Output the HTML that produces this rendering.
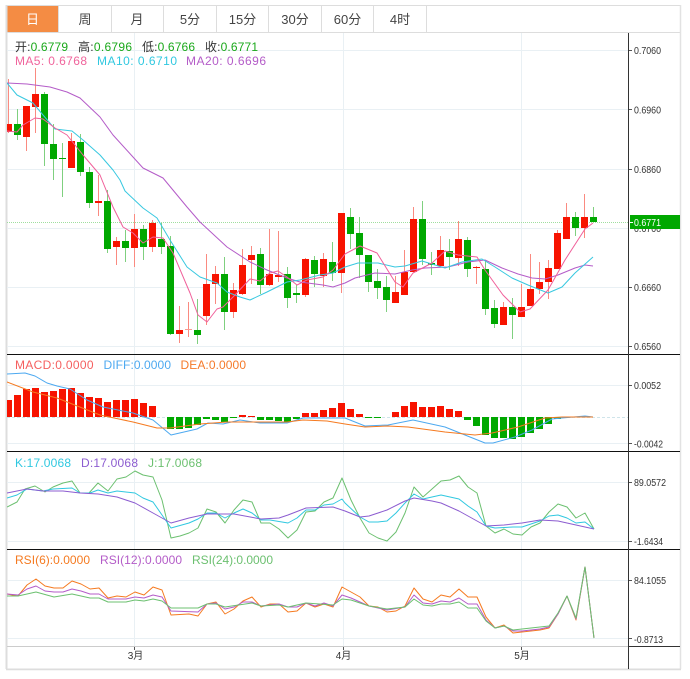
<!DOCTYPE html>
<html><head><meta charset="utf-8"><title>K</title>
<style>
html,body{margin:0;padding:0;background:#fff;width:690px;height:679px;overflow:hidden}
svg{display:block}
text{font-family:"Liberation Sans","Noto Sans CJK SC",sans-serif;font-size:12px}
.t{font-size:13px;fill:#444;text-anchor:middle}
.a{font-size:10px;fill:#333}
.m{font-size:10px;fill:#333;text-anchor:middle}
.l{fill:none;stroke-width:1;stroke-linejoin:round}
</style></head><body>
<svg width="690" height="679" viewBox="0 0 690 679" xmlns="http://www.w3.org/2000/svg">
<defs><clipPath id="c"><rect x="7" y="33" width="621" height="613"/></clipPath></defs>
<rect width="690" height="679" fill="#fff"/>
<!-- tabs -->
<rect x="7" y="6" width="51" height="26" fill="#f48c44"/>
<path d="M6 5.5H680.5V669H6.5V5.5M7 32.5H680M58.5 6V32M111.5 6V32M163.5 6V32M216.5 6V32M268.5 6V32M321.5 6V32M373.5 6V32M426.5 6V32" fill="none" stroke="#dddddd" stroke-width="1"/>
<path d="M6.5 5V669" stroke="#dddddd" stroke-width="2" fill="none"/>
<path d="M680.5 5V669" stroke="#e2e2e2" stroke-width="1.5" fill="none"/>
<path d="M6 669.5H681" stroke="#dddddd" stroke-width="1.5" fill="none"/>
<text class="t" x="32.5" y="24" style="fill:#fff">日</text>
<text class="t" x="85" y="24">周</text>
<text class="t" x="137" y="24">月</text>
<text class="t" x="190" y="24">5分</text>
<text class="t" x="242.5" y="24">15分</text>
<text class="t" x="295" y="24">30分</text>
<text class="t" x="347.5" y="24">60分</text>
<text class="t" x="400" y="24">4时</text>
<!-- grid -->
<path d="M7 50.5H628M7 109.5H628M7 169.5H628M7 228.5H628M7 287.5H628M7 346.5H628M7 385.5H628M7 443.5H628M7 482.5H628M7 541.5H628M7 580.5H628M7 638.5H628M134.5 33V646M343.5 33V646M521.5 33V646" stroke="#e9f0f4" stroke-width="1" fill="none"/>
<path d="M7 222.5H628" stroke="#9fdf9f" stroke-width="1" stroke-dasharray="1 1" fill="none"/>
<g clip-path="url(#c)">
<!-- wicks -->
<path fill="none" stroke="#fa8a80" stroke-width="1" d="M8.5 79V133M26.5 106V151M35.5 68V133M71.5 133V168M98.5 175V216M116.5 237V265M134.5 214V267M152.5 220V252M179.5 306V343M188.5 302V337M206.5 254V325M215.5 266V304M233.5 283V318M242.5 249V295M251.5 246V284M269.5 229V286M278.5 231V282M305.5 258V297M323.5 253V287M341.5 213V293M395.5 276V303M404.5 250V295M413.5 207V272M440.5 236V266M458.5 221V266M476.5 266V284M503.5 302V325M521.5 284V317M530.5 254V306M539.5 262V294M548.5 260V299M557.5 230V269M566.5 203V239M584.5 194V238"/>
<path fill="none" stroke="#7fd07f" stroke-width="1" d="M17.5 109V140M44.5 92V166M53.5 124V180M62.5 143V197M80.5 134V176M89.5 167V208M107.5 190V253M125.5 230V262M143.5 225V260M161.5 223V254M170.5 236V335M197.5 299V344M224.5 257V330M260.5 248V294M287.5 267V308M296.5 285V303M314.5 256V287M332.5 242V281M350.5 208V249M359.5 217V278M368.5 255V292M377.5 269V299M386.5 276V312M422.5 201V265M431.5 252V275M449.5 239V270M467.5 237V277M485.5 260V315M494.5 300V328M512.5 298V339M575.5 212V236M593.5 207V222"/>
<!-- bodies -->
<path fill="#f71300" d="M5 124h7v8h-7zM23 106h7v31h-7zM32 94h7v13h-7zM68 141h7v27h-7zM95 201h7v2h-7zM113 241h7v6h-7zM131 229h7v19h-7zM149 223h7v24h-7zM176 330h7v4h-7zM203 284h7v32h-7zM212 274h7v10h-7zM230 290h7v22h-7zM239 265h7v29h-7zM248 255h7v5h-7zM266 274h7v11h-7zM275 275h7v2h-7zM302 259h7v36h-7zM320 259h7v17h-7zM338 213h7v60h-7zM392 292h7v11h-7zM401 272h7v23h-7zM410 219h7v53h-7zM437 250h7v16h-7zM455 239h7v19h-7zM473 267h7v1h-7zM500 307h7v18h-7zM518 307h7v10h-7zM527 289h7v17h-7zM536 282h7v7h-7zM545 268h7v14h-7zM554 233h7v36h-7zM563 217h7v22h-7zM581 217h7v11h-7z"/>
<path fill="#fa9a90" d="M185 329h7v1h-7z"/>
<path fill="#00a800" d="M14 124h7v11h-7zM41 94h7v50h-7zM50 144h7v15h-7zM59 158h7v1h-7zM77 142h7v30h-7zM86 172h7v31h-7zM104 201h7v48h-7zM122 241h7v7h-7zM140 229h7v18h-7zM158 239h7v8h-7zM167 246h7v88h-7zM194 330h7v5h-7zM221 274h7v38h-7zM257 254h7v31h-7zM284 274h7v24h-7zM293 293h7v2h-7zM311 260h7v14h-7zM329 262h7v11h-7zM347 217h7v17h-7zM356 233h7v22h-7zM365 255h7v27h-7zM374 281h7v7h-7zM383 287h7v13h-7zM419 219h7v40h-7zM428 263h7v2h-7zM446 251h7v6h-7zM464 240h7v29h-7zM482 269h7v40h-7zM491 308h7v16h-7zM509 307h7v8h-7zM572 217h7v11h-7zM590 217h7v5h-7z"/>
<!-- MA -->
<polyline class="l" stroke="#b45cc8" points="7,83 27,84 50,87 67,92 80,98 100,117 113,135 133,157 143,168 163,178 187,207 200,222 227,247 250,262 267,270 287,278 300,282 323,285 333,287 345,283 355,278 375,273 395,274 412,270 425,268 448,267 468,262 485,260 502,268 518,274 532,278 545,279 558,275 575,268 585,265 593,266"/>
<polyline class="l" stroke="#38c8e0" points="7,83 17,95 33,103 43,115 55,129 72,131 83,140 100,155 113,170 120,180 125,191 143,208 157,218 170,240 187,267 200,277 217,283 227,292 240,297 250,300 267,292 287,282 300,280 320,275 333,273 345,267 358,263 378,263 395,267 405,266 422,261 445,268 462,262 482,259 495,267 512,278 528,285 548,293 562,287 575,273 593,257"/>
<polyline class="l" stroke="#f0609a" points="7,131 17,132 23,125 35,118 43,119 55,128 67,135 83,155 100,175 102,180 113,207 123,227 133,233 143,243 153,237 163,238 173,253 190,293 198,315 207,322 217,309 223,307 233,297 250,279 260,281 270,273 278,271 287,277 297,285 307,280 323,277 333,270 345,254 360,246 377,253 395,282 403,287 413,273 432,263 445,251 458,255 477,257 485,270 503,295 520,312 530,309 548,290 565,260 585,229 593,223"/>
<!-- MACD -->
<path d="M7 417.5H628" stroke="#cfe4ea" stroke-width="1" stroke-dasharray="3 2" fill="none"/>
<path fill="#f71300" d="M5 400h7v17h-7zM14 395h7v22h-7zM23 389h7v28h-7zM32 388h7v29h-7zM41 392h7v25h-7zM50 391h7v26h-7zM59 389h7v28h-7zM68 388h7v29h-7zM77 393h7v24h-7zM86 397h7v20h-7zM95 398h7v19h-7zM104 402h7v15h-7zM113 400h7v17h-7zM122 400h7v17h-7zM131 399h7v18h-7zM140 403h7v14h-7zM149 406h7v11h-7zM239 415h7v2h-7zM248 416h7v1h-7zM302 413h7v4h-7zM311 413h7v4h-7zM320 410h7v7h-7zM329 408h7v9h-7zM338 403h7v14h-7zM347 409h7v8h-7zM356 414h7v3h-7zM392 412h7v5h-7zM401 406h7v11h-7zM410 402h7v15h-7zM419 407h7v10h-7zM428 407h7v10h-7zM437 406h7v11h-7zM446 409h7v8h-7zM455 411h7v6h-7z"/>
<path fill="#00a800" d="M167 417h7v12h-7zM176 417h7v12h-7zM185 417h7v11h-7zM194 417h7v8h-7zM203 417h7v2h-7zM212 417h7v3h-7zM221 417h7v5h-7zM230 417h7v1h-7zM257 417h7v3h-7zM266 417h7v3h-7zM275 417h7v4h-7zM284 417h7v5h-7zM293 417h7v2h-7zM365 417h7v1h-7zM374 417h7v1h-7zM464 417h7v3h-7zM473 417h7v9h-7zM482 417h7v18h-7zM491 417h7v21h-7zM500 417h7v21h-7zM509 417h7v22h-7zM518 417h7v20h-7zM527 417h7v16h-7zM536 417h7v12h-7zM545 417h7v7h-7zM554 417h7v2h-7z"/>
<polyline class="l" stroke="#4da9f0" points="7,374 25,373 35,376 47,383 57,386 70,389 87,400 103,407 133,413 153,420 171,435 197,429 208,423 223,424 240,420 260,423 287,423 303,418 333,418 345,418 365,426 388,425 413,420 445,427 465,435 485,443 493,443 515,437 532,430 552,419 562,418 585,416 593,417"/>
<polyline class="l" stroke="#f57a20" points="7,382 33,392 57,398 100,415 133,422 157,428 170,428 200,424 227,422 287,422 303,420 327,421 345,424 365,427 388,426 408,427 445,432 475,435 492,433 518,427 545,418 562,417 593,417"/>
<!-- KDJ -->
<polyline class="l" stroke="#6cc070" points="7,507 17,502 25,489 35,486 45,492 53,487 63,483 72,481 80,493 89,493 98,483 108,491 117,479 126,477 135,471 143,475 153,477 162,500 171,538 180,536 189,533 198,528 207,509 216,512 225,523 234,510 243,500 252,502 261,523 270,523 279,529 288,538 297,530 306,512 315,511 324,502 333,498 342,478 351,500 360,518 369,533 378,538 387,541 396,532 405,513 414,487 423,497 432,489 441,481 450,480 459,476 468,487 477,493 486,526 495,533 504,529 513,534 522,535 531,527 540,523 549,512 558,504 567,507 576,518 585,513 594,529"/>
<polyline class="l" stroke="#30c8e0" points="7,498 17,495 27,489 43,491 53,489 72,488 80,493 90,493 98,490 108,493 117,491 135,493 143,498 153,502 162,515 171,528 189,523 198,519 207,513 216,513 225,518 234,513 243,509 252,513 261,520 270,520 288,523 297,518 306,510 315,510 324,505 333,504 342,499 345,503 360,517 369,522 378,522 387,521 396,513 405,503 414,494 423,499 432,497 441,495 459,499 468,506 477,512 486,526 495,528 513,527 522,527 540,521 549,516 558,515 567,518 576,523 585,522 594,529"/>
<polyline class="l" stroke="#8c5cd0" points="7,493 27,489 43,491 63,491 80,493 98,494 117,497 135,503 153,513 171,523 189,518 207,514 234,514 261,519 279,518 288,515 306,508 333,507 345,511 360,517 369,516 387,510 405,501 414,498 432,501 441,503 459,511 477,521 486,526 504,525 522,523 540,520 558,521 576,525 594,529"/>
<!-- RSI -->
<polyline class="l" stroke="#f57a20" points="7,594 18,596 27,585 36,579 45,586 54,588 63,588 72,581 81,584 90,589 99,588 108,598 117,596 126,597 135,592 144,595 153,587 162,590 171,615 189,614 198,616 207,604 216,602 225,614 234,609 243,601 252,597 261,607 270,604 279,604 288,612 297,611 306,603 315,607 324,604 333,607 342,587 351,592 360,597 369,606 378,607 387,612 396,611 405,606 414,588 423,599 432,602 441,595 450,597 459,589 468,597 477,597 486,617 495,628 504,625 513,633 522,632 531,631 540,630 549,628 558,614 567,596 576,620 585,567 594,638"/>
<polyline class="l" stroke="#b45cc8" points="7,594 18,595 27,589 36,586 45,591 54,592 63,592 72,589 81,591 90,594 99,594 108,599 126,599 135,597 144,598 153,595 162,597 171,611 198,612 207,604 216,603 225,609 234,607 243,602 252,602 261,606 279,604 288,607 297,607 306,603 315,606 324,603 333,606 342,595 351,598 360,602 369,606 387,610 405,607 414,595 423,603 432,604 441,601 450,602 459,598 468,604 477,604 486,620 495,628 504,626 513,631 522,631 540,629 549,627 558,614 567,596 576,619 585,567 594,638"/>
<polyline class="l" stroke="#6cc070" points="7,596 18,596 36,592 54,597 72,594 90,598 99,598 108,602 126,602 135,600 144,601 153,599 162,601 171,608 198,608 207,604 216,604 225,607 252,603 261,606 279,605 288,607 306,603 333,605 342,599 351,600 369,606 387,609 405,607 414,599 423,605 432,606 441,604 450,604 459,602 468,608 477,608 486,621 495,628 504,626 513,630 540,627 549,626 558,613 567,596 576,618 585,567 594,638"/>
</g>
<!-- separators -->
<path d="M7 354.5H680M7 451.5H680M7 549.5H680" stroke="#111" stroke-width="1" fill="none"/>
<path d="M7 646.5H628" stroke="#cccccc" stroke-width="1" fill="none"/>
<path d="M628.5 33V669" stroke="#333" stroke-width="1" fill="none"/>
<path d="M628.5 646.5H680" stroke="#333" stroke-width="1" fill="none"/>
<path d="M629 50.5h3M629 109.5h3M629 169.5h3M629 287.5h3M629 346.5h3M629 385.5h3M629 443.5h3M629 482.5h3M629 541.5h3M629 580.5h3M629 638.5h3M134.5 647v3M343.5 647v3M521.5 647v3" stroke="#555" stroke-width="1" fill="none"/>
<!-- axis labels -->
<text class="a" x="634" y="54" textLength="27" lengthAdjust="spacingAndGlyphs">0.7060</text>
<text class="a" x="634" y="113.500" textLength="27" lengthAdjust="spacingAndGlyphs">0.6960</text>
<text class="a" x="634" y="173" textLength="27" lengthAdjust="spacingAndGlyphs">0.6860</text>
<text class="a" x="634" y="232" textLength="27" lengthAdjust="spacingAndGlyphs">0.6760</text>
<text class="a" x="634" y="291" textLength="27" lengthAdjust="spacingAndGlyphs">0.6660</text>
<text class="a" x="634" y="350" textLength="27" lengthAdjust="spacingAndGlyphs">0.6560</text>
<rect x="630" y="215" width="50" height="14" fill="#00a800"/>
<path d="M630 222.500h3" stroke="#fff" stroke-width="1"/>
<text class="a" x="634" y="226" style="fill:#fff" textLength="27" lengthAdjust="spacingAndGlyphs">0.6771</text>
<text class="a" x="634" y="389" textLength="27" lengthAdjust="spacingAndGlyphs">0.0052</text>
<text class="a" x="634" y="447.500" textLength="29" lengthAdjust="spacingAndGlyphs">-0.0042</text>
<text class="a" x="634" y="486" textLength="32" lengthAdjust="spacingAndGlyphs">89.0572</text>
<text class="a" x="634" y="545" textLength="29" lengthAdjust="spacingAndGlyphs">-1.6434</text>
<text class="a" x="634" y="584" textLength="32" lengthAdjust="spacingAndGlyphs">84.1055</text>
<text class="a" x="634" y="643" textLength="29" lengthAdjust="spacingAndGlyphs">-0.8713</text>
<text class="m" x="135.500" y="659">3月</text>
<text class="m" x="343.5" y="659">4月</text>
<text class="m" x="522" y="659">5月</text>
<!-- headers -->
<text x="15" y="51" fill="#333" textLength="53">开:<tspan fill="#1aa81a">0.6779</tspan></text>
<text x="78" y="51" fill="#333" textLength="54">高:<tspan fill="#1aa81a">0.6796</tspan></text>
<text x="142" y="51" fill="#333" textLength="53">低:<tspan fill="#1aa81a">0.6766</tspan></text>
<text x="205" y="51" fill="#333" textLength="53">收:<tspan fill="#1aa81a">0.6771</tspan></text>
<text x="15" y="65" fill="#f0649c" textLength="72">MA5: 0.6768</text>
<text x="97" y="65" fill="#30c8e0" textLength="80">MA10: 0.6710</text>
<text x="186" y="65" fill="#b45cc8" textLength="80">MA20: 0.6696</text>
<text x="15" y="369" fill="#f55f5f" textLength="78.500">MACD:0.0000</text>
<text x="103.500" y="369" fill="#4da9f0" textLength="67.500">DIFF:0.0000</text>
<text x="180.500" y="369" fill="#f57a2a" textLength="65.500">DEA:0.0000</text>
<text x="15" y="467" fill="#30c8e0" textLength="56">K:17.0068</text>
<text x="81" y="467" fill="#8c5cd0" textLength="57">D:17.0068</text>
<text x="148" y="467" fill="#6cc070" textLength="54">J:17.0068</text>
<text x="15" y="564" fill="#f57a20" textLength="75">RSI(6):0.0000</text>
<text x="100" y="564" fill="#b45cc8" textLength="82">RSI(12):0.0000</text>
<text x="192" y="564" fill="#6cc070" textLength="81">RSI(24):0.0000</text>
</svg>
</body></html>
